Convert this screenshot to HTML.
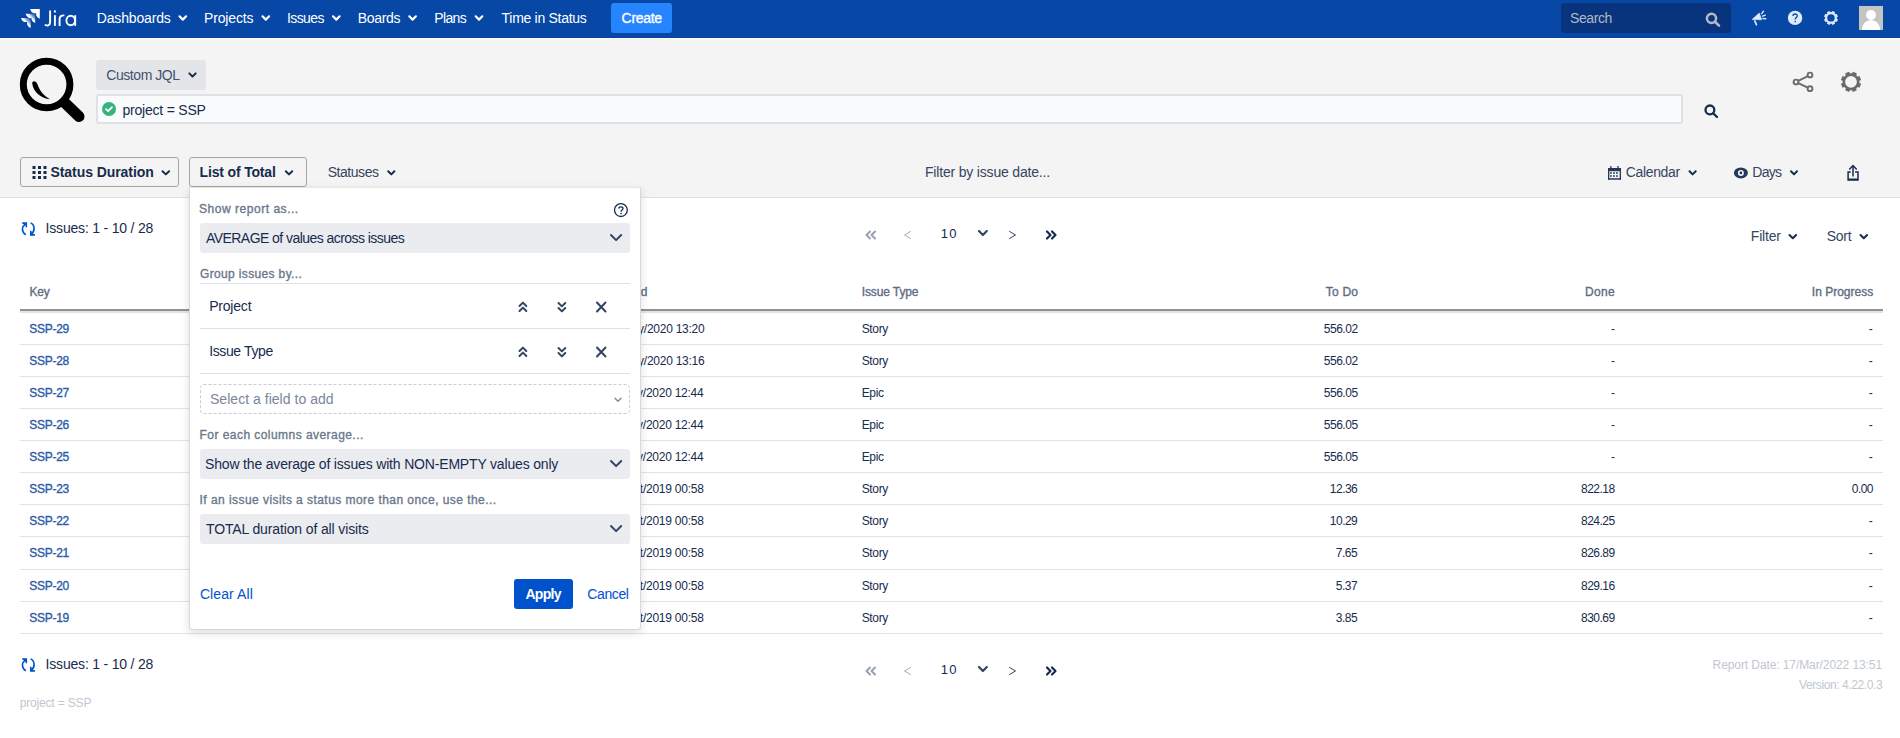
<!DOCTYPE html>
<html><head><meta charset="utf-8">
<style>
html,body{margin:0;padding:0}
body{width:1900px;height:738px;overflow:hidden;position:relative;background:#fff;font-family:'Liberation Sans',sans-serif}
.t{position:absolute;white-space:nowrap;font-family:'Liberation Sans',sans-serif}
.a{position:absolute}
svg{position:absolute;overflow:visible}
</style></head><body>
<!-- header -->
<div class="a" style="left:0;top:0;width:1900px;height:37px;background:#0747a6"></div>
<div class="a" style="left:0;top:37px;width:1900px;height:1px;background:#0a3f9e"></div>
<div class="a" style="left:0;top:38px;width:1900px;height:1px;background:#fbfcf9"></div>
<div class="a" style="left:0;top:39px;width:1900px;height:158px;background:#f4f4f4"></div>
<div class="a" style="left:0;top:197px;width:1900px;height:1px;background:#e0e1e6"></div>

<!-- jira logo -->
<svg style="left:0;top:0" width="60" height="38">
  <defs>
   <linearGradient id="lg1" gradientUnits="objectBoundingBox" x1="0.85" y1="0.15" x2="0.2" y2="0.8"><stop offset="0" stop-color="#fff" stop-opacity="0.2"/><stop offset="0.45" stop-color="#fff" stop-opacity="1"/><stop offset="1" stop-color="#fff"/></linearGradient>
  </defs>
  <path d="M30 9.1 L39.8 9.1 L39.8 18.7 Q37 17.8 36.2 15.5 L36.2 13.3 L33.6 13.3 Q31 12.2 30 9.1 Z" fill="#fff"/>
  <path d="M25.6 13.8 L35.2 13.8 L35.2 22.9 Q32.5 22 31.6 19.7 L31.6 17.9 L28.9 17.9 Q26.5 17 25.6 13.8 Z" fill="url(#lg1)"/>
  <path d="M20.9 18 L30.7 18 L30.7 27.8 Q28 27 27.1 24.5 L27.1 22.1 L24.3 22.1 Q21.8 21 20.9 18 Z" fill="url(#lg1)"/>
</svg>
<svg style="left:0;top:0" width="90" height="38">
 <g fill="none" stroke="#fff" stroke-width="1.9">
  <path d="M50.1 10.6 V22.3 C50.1 25.6 46.8 26.3 44.8 24.6"/>
  <path d="M54.9 15.2 V25.9"/>
  <path d="M59.6 25.9 V19 C59.6 16.3 61.6 15.2 64.4 15.4"/>
  <ellipse cx="70.7" cy="20.55" rx="4.3" ry="4.75"/>
  <path d="M75.2 15.2 V25.9"/>
 </g>
 <circle cx="54.9" cy="11.5" r="1.15" fill="#fff"/>
</svg>
<!-- nav chevrons -->
<svg style="left:0;top:0" width="1900" height="38">
 <g fill="none" stroke="#fff" stroke-width="2.2" stroke-linecap="round" stroke-linejoin="round">
  <path d="M179.5 16.3 L182.8 19.6 L186.1 16.3"/>
  <path d="M262.5 16.3 L265.8 19.6 L269.1 16.3"/>
  <path d="M333 16.3 L336.3 19.6 L339.6 16.3"/>
  <path d="M409.3 16.3 L412.6 19.6 L415.9 16.3"/>
  <path d="M475.7 16.3 L479 19.6 L482.3 16.3"/>
 </g>
</svg>
<div class="a" style="left:611px;top:3px;width:61px;height:30px;background:#2684ff;border-radius:3px"></div>
<div class="a" style="left:1561px;top:3px;width:170px;height:30px;background:#07347c;border-radius:3px"></div>
<svg style="left:1705px;top:12px" width="16" height="15" viewBox="0 0 16 15">
 <circle cx="6.5" cy="6.3" r="4.6" fill="none" stroke="#b3bac5" stroke-width="2.5"/>
 <path d="M10 9.8 L14 13.6" stroke="#b3bac5" stroke-width="2.6" stroke-linecap="round"/>
</svg>
<!-- megaphone -->
<svg style="left:0;top:0" width="1900" height="38">
 <path d="M1752.1 19.4 L1759.3 12.9 L1761.7 19.8 Z" fill="#deebff" stroke="#deebff" stroke-width="0.6" stroke-linejoin="round"/>
 <path d="M1754.8 21 L1756.4 24.6" stroke="#deebff" stroke-width="1.7" stroke-linecap="round"/>
 <g stroke="#deebff" stroke-width="1.4" stroke-linecap="round">
  <path d="M1761.6 13.6 L1763.5 11.3"/><path d="M1762.6 16.2 L1765.3 15.1"/><path d="M1763 18.5 L1765.8 18.7"/>
 </g>
 <circle cx="1795.05" cy="17.9" r="7.2" fill="#deebff"/>
 <path d="M1793 15.9 C1793 13.4 1797.3 13.4 1797.3 15.8 C1797.3 17.5 1795.2 17.5 1795.2 19.6" fill="none" stroke="#0747a6" stroke-width="1.3"/>
 <circle cx="1795.2" cy="21.6" r="0.8" fill="#0747a6"/>
 <path fill="#deebff" fill-rule="evenodd" d="M1836.85 17.13 L1837.98 16.61 L1836.85 13.88 L1835.68 14.31 L1834.59 13.22 L1835.02 12.05 L1832.29 10.92 L1831.77 12.05 L1830.23 12.05 L1829.71 10.92 L1826.98 12.05 L1827.41 13.22 L1826.32 14.31 L1825.15 13.88 L1824.02 16.61 L1825.15 17.13 L1825.15 18.67 L1824.02 19.19 L1825.15 21.92 L1826.32 21.49 L1827.41 22.58 L1826.98 23.75 L1829.71 24.88 L1830.23 23.75 L1831.77 23.75 L1832.29 24.88 L1835.02 23.75 L1834.59 22.58 L1835.68 21.49 L1836.85 21.92 L1837.98 19.19 L1836.85 18.67 Z M1834.70 17.90 A3.7 3.7 0 1 0 1827.30 17.90 A3.7 3.7 0 1 0 1834.70 17.90 Z"/>
</svg>
<!-- avatar -->
<div class="a" style="left:1859px;top:6px;width:24px;height:24px;background:#c4c4c4;overflow:hidden">
 <div class="a" style="left:7px;top:4px;width:10px;height:10px;border-radius:50%;background:#fff"></div>
 <div class="a" style="left:3px;top:14px;width:18px;height:16px;border-radius:9px 9px 0 0;background:#fff"></div>
</div>

<!-- big magnifier -->
<svg style="left:0;top:40px" width="100" height="90">
 <circle cx="46.6" cy="44.5" r="23.3" fill="none" stroke="#000" stroke-width="7"/>
 <path d="M64.5 62.5 L79 76.5" stroke="#000" stroke-width="11" stroke-linecap="round"/>
 <path d="M32.3 44 C31.5 40.5 36 40 37.3 44 C39.5 50.5 43.5 55.5 50 59.3 C41.5 58.5 33.5 52.5 32.3 44 Z" fill="#000"/>
</svg>
<!-- custom jql -->
<div class="a" style="left:96px;top:60px;width:110px;height:30px;background:#e4e5e9;border-radius:3px"></div>
<svg style="left:0;top:0" width="1900" height="200">
 <g fill="none" stroke-linecap="round" stroke-linejoin="round">
  <path d="M189.3 73.4 L192.5 76.5 L195.7 73.4" stroke="#172b4d" stroke-width="2"/>
  <path d="M162.5 171.2 L165.8 174.4 L169.1 171.2" stroke="#172b4d" stroke-width="2"/>
  <path d="M285.8 171.2 L289 174.4 L292.2 171.2" stroke="#172b4d" stroke-width="2"/>
  <path d="M388.2 171.2 L391.3 174.4 L394.4 171.2" stroke="#172b4d" stroke-width="2"/>
  <path d="M1689.5 171.3 L1692.6 174.4 L1695.7 171.3" stroke="#172b4d" stroke-width="2"/>
  <path d="M1791 171.3 L1794 174.4 L1797 171.3" stroke="#172b4d" stroke-width="2"/>
 </g>
</svg>
<div class="a" style="left:96px;top:94px;width:1583px;height:26px;background:#fafbfc;border:2px solid #dfe1e6;border-radius:3px"></div>
<svg style="left:102px;top:102px" width="14" height="14" viewBox="0 0 14 14">
 <circle cx="7" cy="7" r="7" fill="#36b37e"/>
 <path d="M4 7.2 L6.1 9.2 L10 5.2" fill="none" stroke="#fff" stroke-width="1.8" stroke-linecap="round" stroke-linejoin="round"/>
</svg>
<svg style="left:1704px;top:104px" width="15" height="15" viewBox="0 0 15 15">
 <circle cx="5.9" cy="5.9" r="4.4" fill="none" stroke="#172b4d" stroke-width="2.3"/>
 <path d="M9.3 9.4 L13 13" stroke="#172b4d" stroke-width="2.3" stroke-linecap="round"/>
</svg>
<!-- share -->
<svg style="left:0;top:0" width="1900" height="100">
 <g fill="none" stroke="#6b6b6b" stroke-width="1.9">
  <circle cx="1796" cy="82" r="2.4"/><circle cx="1810" cy="75" r="2.4"/><circle cx="1810" cy="88.7" r="2.4"/>
  <path d="M1798.2 80.9 L1807.8 76.1 M1798.2 83.1 L1807.8 87.6"/>
 </g>
</svg>
<!-- gear gray -->
<svg style="left:0;top:0" width="1900" height="100">
 <path fill="#6b6b6b" fill-rule="evenodd" d="M1859.43 80.69 L1861.13 79.92 L1859.49 75.97 L1857.74 76.63 L1856.17 75.06 L1856.83 73.31 L1852.88 71.67 L1852.11 73.37 L1849.89 73.37 L1849.12 71.67 L1845.17 73.31 L1845.83 75.06 L1844.26 76.63 L1842.51 75.97 L1840.87 79.92 L1842.57 80.69 L1842.57 82.91 L1840.87 83.68 L1842.51 87.63 L1844.26 86.97 L1845.83 88.54 L1845.17 90.29 L1849.12 91.93 L1849.89 90.23 L1852.11 90.23 L1852.88 91.93 L1856.83 90.29 L1856.17 88.54 L1857.74 86.97 L1859.49 87.63 L1861.13 83.68 L1859.43 82.91 Z M1856.90 81.80 A5.9 5.9 0 1 0 1845.10 81.80 A5.9 5.9 0 1 0 1856.90 81.80 Z"/>
</svg>
<!-- toolbar buttons -->
<div class="a" style="left:20px;top:157px;width:157px;height:28px;border:1px solid #a6a6a6;border-radius:3px"></div>
<div class="a" style="left:189px;top:157px;width:116px;height:28px;border:1px solid #a6a6a6;border-radius:3px"></div>
<svg style="left:32px;top:166px" width="15" height="14" viewBox="0 0 15 14">
 <g fill="#172b4d">
  <rect x="0.5" y="0" width="3" height="3"/><rect x="6" y="0" width="3" height="3"/><rect x="11.5" y="0" width="3" height="3"/>
  <rect x="0.5" y="5" width="3" height="3"/><rect x="6" y="5" width="3" height="3"/><rect x="11.5" y="5" width="3" height="3"/>
  <rect x="0.5" y="10" width="3" height="3"/><rect x="6" y="10" width="3" height="3"/><rect x="11.5" y="10" width="3" height="3"/>
 </g>
</svg>
<!-- calendar / eye / export -->
<svg style="left:0;top:0" width="1900" height="200">
 <g fill="#253858">
  <rect x="1608" y="168" width="13" height="3.2"/>
  <rect x="1608" y="168" width="1.3" height="11.6"/>
  <rect x="1619.7" y="168" width="1.3" height="11.6"/>
  <rect x="1608" y="178.2" width="13" height="1.5"/>
  <rect x="1610.2" y="166" width="1.3" height="2.5"/><rect x="1617.4" y="166" width="1.3" height="2.5"/>
  <rect x="1610.2" y="172.1" width="1.5" height="1.8"/><rect x="1613.2" y="172.1" width="1.5" height="1.8"/><rect x="1616.2" y="172.1" width="1.5" height="1.8"/>
  <rect x="1610.2" y="175.1" width="1.5" height="1.8"/><rect x="1613.2" y="175.1" width="1.5" height="1.8"/><rect x="1616.2" y="175.1" width="1.5" height="1.8"/>
 </g>
 <ellipse cx="1740.9" cy="172.9" rx="7" ry="5.5" fill="#253858"/>
 <circle cx="1740.9" cy="172.9" r="3" fill="#f4f4f4"/>
 <circle cx="1740.9" cy="172.9" r="1.3" fill="#172b4d"/>
 <g fill="none" stroke="#172b4d" stroke-width="1.5">
  <path d="M1850.8 172.1 H1848.1 V180 H1858 V172.1 H1855.1"/>
  <path d="M1853 176.5 V166"/>
  <path d="M1849.3 169.4 L1853 165.6 L1856.7 169.4"/>
 </g>
 <path d="M1848.1 179.3 H1858" stroke="#172b4d" stroke-width="1.6"/>
</svg>

<!-- refresh icons & pagination -->
<svg style="left:0;top:0" width="1900" height="738">
 <g id="pg1">
 <g fill="none" stroke="#0052cc" stroke-width="1.6">
  <path d="M26 223.8 C21.3 226.5 21.3 232 25.8 234.8"/>
  <path d="M22.3 223.1 H26.3 V227.3"/>
  <path d="M30.6 222.9 C35.2 225.2 35.2 231.5 31 234.2"/>
  <path d="M34.9 234.9 H30.8 V230.8"/>
 </g>
 <g fill="none" stroke-linecap="round" stroke-linejoin="round">
  <path d="M870 231.5 L866.5 235 L870 238.5 M875 231.5 L871.5 235 L875 238.5" stroke="#97a0af" stroke-width="2"/>
  <path d="M910.5 231.5 L904.5 235 L910.5 238.5" stroke="#a5adba" stroke-width="1"/>
  <path d="M979 231 L982.9 235 L986.8 231" stroke="#344563" stroke-width="2.2"/>
  <path d="M1009.5 231.5 L1015.5 235 L1009.5 238.5" stroke="#344563" stroke-width="1"/>
  <path d="M1047 231.5 L1050.5 235 L1047 238.5 M1052 231.5 L1055.5 235 L1052 238.5" stroke="#172b4d" stroke-width="2.2"/>
  <path d="M1789.5 235 L1792.8 238.3 L1796.1 235" stroke="#172b4d" stroke-width="2"/>
  <path d="M1860.5 235 L1863.8 238.3 L1867.1 235" stroke="#172b4d" stroke-width="2"/>
 </g>
 </g>
 <g transform="translate(0,436)">
 <g fill="none" stroke="#0052cc" stroke-width="1.6">
  <path d="M26 223.8 C21.3 226.5 21.3 232 25.8 234.8"/>
  <path d="M22.3 223.1 H26.3 V227.3"/>
  <path d="M30.6 222.9 C35.2 225.2 35.2 231.5 31 234.2"/>
  <path d="M34.9 234.9 H30.8 V230.8"/>
 </g>
 <g fill="none" stroke-linecap="round" stroke-linejoin="round">
  <path d="M870 231.5 L866.5 235 L870 238.5 M875 231.5 L871.5 235 L875 238.5" stroke="#97a0af" stroke-width="2"/>
  <path d="M910.5 231.5 L904.5 235 L910.5 238.5" stroke="#a5adba" stroke-width="1"/>
  <path d="M979 231 L982.9 235 L986.8 231" stroke="#344563" stroke-width="2.2"/>
  <path d="M1009.5 231.5 L1015.5 235 L1009.5 238.5" stroke="#344563" stroke-width="1"/>
  <path d="M1047 231.5 L1050.5 235 L1047 238.5 M1052 231.5 L1055.5 235 L1052 238.5" stroke="#172b4d" stroke-width="2.2"/>
 </g>
 </g>
</svg>

<!-- table lines -->
<div class="a" style="left:20px;top:309px;width:1863px;height:2px;background:#909090"></div>
<div class="a" style="left:20px;top:311px;width:1863px;height:2px;background:#e3e4e8"></div>
<div class="a" style="left:20px;top:344px;width:1863px;height:1px;background:#e1e2e6"></div>
<div class="a" style="left:20px;top:376px;width:1863px;height:1px;background:#e1e2e6"></div>
<div class="a" style="left:20px;top:408px;width:1863px;height:1px;background:#e1e2e6"></div>
<div class="a" style="left:20px;top:440px;width:1863px;height:1px;background:#e1e2e6"></div>
<div class="a" style="left:20px;top:472px;width:1863px;height:1px;background:#e1e2e6"></div>
<div class="a" style="left:20px;top:504px;width:1863px;height:1px;background:#e1e2e6"></div>
<div class="a" style="left:20px;top:536px;width:1863px;height:1px;background:#e1e2e6"></div>
<div class="a" style="left:20px;top:569px;width:1863px;height:1px;background:#e1e2e6"></div>
<div class="a" style="left:20px;top:601px;width:1863px;height:1px;background:#e1e2e6"></div>
<div class="a" style="left:20px;top:633px;width:1863px;height:1px;background:#e1e2e6"></div>

<!-- popup -->
<div class="a" style="left:189px;top:187px;width:450px;height:441px;background:#fff;border:1px solid #d8d8d8;border-top-color:#e6e6e6;border-radius:0 0 3px 3px;box-shadow:0 3px 10px rgba(0,0,0,0.13);z-index:3"></div>
<svg style="left:0;top:0;z-index:4" width="1900" height="738">
 <circle cx="620.9" cy="210.1" r="6.4" fill="none" stroke="#172b4d" stroke-width="1.3"/>
 <path d="M618.9 208.5 C618.9 206.3 623 206.3 623 208.5 C623 210 621 210 621 211.8" fill="none" stroke="#172b4d" stroke-width="1.3"/>
 <circle cx="621" cy="213.6" r="0.8" fill="#172b4d"/>
 <rect x="200" y="223" width="430" height="30" rx="3" fill="#ebecf0"/>
 <rect x="200" y="449" width="430" height="30" rx="3" fill="#ebecf0"/>
 <rect x="200" y="514" width="430" height="30" rx="3" fill="#ebecf0"/>
 <rect x="200.5" y="384.5" width="429" height="29" rx="3" fill="none" stroke="#c8ccd4" stroke-dasharray="3 2"/>
 <rect x="200" y="283" width="430" height="1" fill="#dfe1e6"/>
 <rect x="200" y="328" width="430" height="1" fill="#dfe1e6"/>
 <rect x="200" y="373" width="430" height="1" fill="#dfe1e6"/>
 <g fill="none" stroke="#344563" stroke-width="2" stroke-linecap="round" stroke-linejoin="round">
  <path d="M611 235 L616.1 240.1 L621.2 235"/>
  <path d="M611 461 L616.1 466.1 L621.2 461"/>
  <path d="M611 526 L616.1 531.1 L621.2 526"/>
  <path d="M519.5 306 L522.9 302.6 L526.3 306 M519.5 311 L522.9 307.6 L526.3 311"/>
  <path d="M558.5 303 L561.9 306.4 L565.3 303 M558.5 308 L561.9 311.4 L565.3 308"/>
  <path d="M597 302.5 L605.5 311.5 M605.5 302.5 L597 311.5"/>
  <path d="M519.5 351 L522.9 347.6 L526.3 351 M519.5 356 L522.9 352.6 L526.3 356"/>
  <path d="M558.5 348 L561.9 351.4 L565.3 348 M558.5 353 L561.9 356.4 L565.3 353"/>
  <path d="M597 347.5 L605.5 356.5 M605.5 347.5 L597 356.5"/>
 </g>
 <path d="M615 398.2 L618 401.2 L621 398.2" fill="none" stroke="#7a869a" stroke-width="1.3" stroke-linecap="round" stroke-linejoin="round"/>
 <rect x="514" y="579" width="59" height="30" rx="3" fill="#0052cc"/>
</svg>
<div class="t" style="left:96.80px;top:11px;font-size:14px;line-height:14px;font-weight:400;color:#ffffff;letter-spacing:-0.167px;z-index:1;">Dashboards</div>
<div class="t" style="left:204.00px;top:11px;font-size:14px;line-height:14px;font-weight:400;color:#ffffff;letter-spacing:-0.143px;z-index:1;">Projects</div>
<div class="t" style="left:287.00px;top:11px;font-size:14px;line-height:14px;font-weight:400;color:#ffffff;letter-spacing:-0.6px;z-index:1;">Issues</div>
<div class="t" style="left:357.70px;top:11px;font-size:14px;line-height:14px;font-weight:400;color:#ffffff;letter-spacing:-0.32px;z-index:1;">Boards</div>
<div class="t" style="left:434.20px;top:11px;font-size:14px;line-height:14px;font-weight:400;color:#ffffff;letter-spacing:-0.6px;z-index:1;">Plans</div>
<div class="t" style="left:501.60px;top:11px;font-size:14px;line-height:14px;font-weight:400;color:#ffffff;letter-spacing:-0.292px;z-index:1;">Time in Status</div>
<div class="t" style="left:621.60px;top:11px;font-size:14px;line-height:14px;font-weight:400;color:#ffffff;letter-spacing:-0.32px;z-index:1;-webkit-text-stroke:0.35px currentColor;">Create</div>
<div class="t" style="left:1570.00px;top:11px;font-size:14px;line-height:14px;font-weight:400;color:#b3bac5;letter-spacing:-0.4px;z-index:1;">Search</div>
<div class="t" style="left:106.30px;top:68px;font-size:14px;line-height:14px;font-weight:400;color:#42526e;letter-spacing:-0.444px;z-index:1;">Custom JQL</div>
<div class="t" style="left:122.50px;top:103px;font-size:14px;line-height:14px;font-weight:400;color:#172b4d;letter-spacing:-0.217px;z-index:1;">project = SSP</div>
<div class="t" style="left:50.50px;top:165px;font-size:14px;line-height:14px;font-weight:700;color:#172b4d;letter-spacing:-0.071px;z-index:1;">Status Duration</div>
<div class="t" style="left:199.60px;top:165px;font-size:14px;line-height:14px;font-weight:700;color:#172b4d;letter-spacing:-0.167px;z-index:1;">List of Total</div>
<div class="t" style="left:327.70px;top:165px;font-size:14px;line-height:14px;font-weight:400;color:#344563;letter-spacing:-0.457px;z-index:1;">Statuses</div>
<div class="t" style="left:925.00px;top:165px;font-size:14px;line-height:14px;font-weight:400;color:#344563;letter-spacing:-0.182px;z-index:1;">Filter by issue date...</div>
<div class="t" style="left:1625.70px;top:165px;font-size:14px;line-height:14px;font-weight:400;color:#344563;letter-spacing:-0.329px;z-index:1;">Calendar</div>
<div class="t" style="left:1752.30px;top:165px;font-size:14px;line-height:14px;font-weight:400;color:#344563;letter-spacing:-0.767px;z-index:1;">Days</div>
<div class="t" style="left:45.60px;top:221px;font-size:14px;line-height:14px;font-weight:400;color:#172b4d;letter-spacing:-0.194px;z-index:1;">Issues: 1 - 10 / 28</div>
<div class="t" style="left:45.60px;top:657px;font-size:14px;line-height:14px;font-weight:400;color:#172b4d;letter-spacing:-0.194px;z-index:1;">Issues: 1 - 10 / 28</div>
<div class="t" style="left:940.70px;top:227px;font-size:13px;line-height:13px;font-weight:400;color:#172b4d;letter-spacing:1.3px;z-index:1;">10</div>
<div class="t" style="left:940.70px;top:663px;font-size:13px;line-height:13px;font-weight:400;color:#172b4d;letter-spacing:1.3px;z-index:1;">10</div>
<div class="t" style="left:1750.80px;top:229px;font-size:14px;line-height:14px;font-weight:400;color:#344563;letter-spacing:-0.18px;z-index:1;">Filter</div>
<div class="t" style="left:1826.70px;top:229px;font-size:14px;line-height:14px;font-weight:400;color:#344563;letter-spacing:-0.233px;z-index:1;">Sort</div>
<div class="t" style="left:29.60px;top:286px;font-size:12px;line-height:12px;font-weight:400;color:#5e6c84;letter-spacing:-0.3px;z-index:1;-webkit-text-stroke:0.35px currentColor;">Key</div>
<div class="t" style="left:604.80px;top:286px;font-size:12px;line-height:12px;font-weight:400;color:#5e6c84;letter-spacing:0px;z-index:1;-webkit-text-stroke:0.35px currentColor;">Created</div>
<div class="t" style="left:861.70px;top:286px;font-size:12px;line-height:12px;font-weight:400;color:#5e6c84;letter-spacing:-0.111px;z-index:1;-webkit-text-stroke:0.35px currentColor;">Issue Type</div>
<div class="t" style="left:1325.80px;top:286px;font-size:12px;line-height:12px;font-weight:400;color:#5e6c84;letter-spacing:0.2px;z-index:1;-webkit-text-stroke:0.35px currentColor;">To Do</div>
<div class="t" style="left:1585.00px;top:286px;font-size:12px;line-height:12px;font-weight:400;color:#5e6c84;letter-spacing:0.333px;z-index:1;-webkit-text-stroke:0.35px currentColor;">Done</div>
<div class="t" style="left:1811.80px;top:286px;font-size:12px;line-height:12px;font-weight:400;color:#5e6c84;letter-spacing:0.0px;z-index:1;-webkit-text-stroke:0.35px currentColor;">In Progress</div>
<div class="t" style="left:29.20px;top:323px;font-size:12px;line-height:12px;font-weight:400;color:#2d5ca8;letter-spacing:-0.26px;z-index:1;-webkit-text-stroke:0.35px currentColor;">SSP-29</div>
<div class="t" style="left:606.00px;top:323px;font-size:12px;line-height:12px;font-weight:400;color:#172b4d;letter-spacing:-0.253px;z-index:1;">17/May/2020 13:20</div>
<div class="t" style="left:861.70px;top:323px;font-size:12px;line-height:12px;font-weight:400;color:#172b4d;letter-spacing:-0.338px;z-index:1;">Story</div>
<div class="t" style="left:1323.80px;top:323px;font-size:12px;line-height:12px;font-weight:400;color:#172b4d;letter-spacing:-0.49px;z-index:1;">556.02</div>
<div class="t" style="left:1611.00px;top:323px;font-size:12px;line-height:12px;font-weight:400;color:#172b4d;letter-spacing:0px;z-index:1;">-</div>
<div class="t" style="left:1868.80px;top:323px;font-size:12px;line-height:12px;font-weight:400;color:#172b4d;letter-spacing:0px;z-index:1;">-</div>
<div class="t" style="left:29.20px;top:355px;font-size:12px;line-height:12px;font-weight:400;color:#2d5ca8;letter-spacing:-0.26px;z-index:1;-webkit-text-stroke:0.35px currentColor;">SSP-28</div>
<div class="t" style="left:606.00px;top:355px;font-size:12px;line-height:12px;font-weight:400;color:#172b4d;letter-spacing:-0.253px;z-index:1;">17/May/2020 13:16</div>
<div class="t" style="left:861.70px;top:355px;font-size:12px;line-height:12px;font-weight:400;color:#172b4d;letter-spacing:-0.338px;z-index:1;">Story</div>
<div class="t" style="left:1323.80px;top:355px;font-size:12px;line-height:12px;font-weight:400;color:#172b4d;letter-spacing:-0.49px;z-index:1;">556.02</div>
<div class="t" style="left:1611.00px;top:355px;font-size:12px;line-height:12px;font-weight:400;color:#172b4d;letter-spacing:0px;z-index:1;">-</div>
<div class="t" style="left:1868.80px;top:355px;font-size:12px;line-height:12px;font-weight:400;color:#172b4d;letter-spacing:0px;z-index:1;">-</div>
<div class="t" style="left:29.20px;top:387px;font-size:12px;line-height:12px;font-weight:400;color:#2d5ca8;letter-spacing:-0.26px;z-index:1;-webkit-text-stroke:0.35px currentColor;">SSP-27</div>
<div class="t" style="left:605.00px;top:387px;font-size:12px;line-height:12px;font-weight:400;color:#172b4d;letter-spacing:-0.255px;z-index:1;">17/May/2020 12:44</div>
<div class="t" style="left:861.70px;top:387px;font-size:12px;line-height:12px;font-weight:400;color:#172b4d;letter-spacing:-0.367px;z-index:1;">Epic</div>
<div class="t" style="left:1323.80px;top:387px;font-size:12px;line-height:12px;font-weight:400;color:#172b4d;letter-spacing:-0.49px;z-index:1;">556.05</div>
<div class="t" style="left:1611.00px;top:387px;font-size:12px;line-height:12px;font-weight:400;color:#172b4d;letter-spacing:0px;z-index:1;">-</div>
<div class="t" style="left:1868.80px;top:387px;font-size:12px;line-height:12px;font-weight:400;color:#172b4d;letter-spacing:0px;z-index:1;">-</div>
<div class="t" style="left:29.20px;top:419px;font-size:12px;line-height:12px;font-weight:400;color:#2d5ca8;letter-spacing:-0.26px;z-index:1;-webkit-text-stroke:0.35px currentColor;">SSP-26</div>
<div class="t" style="left:605.00px;top:419px;font-size:12px;line-height:12px;font-weight:400;color:#172b4d;letter-spacing:-0.255px;z-index:1;">17/May/2020 12:44</div>
<div class="t" style="left:861.70px;top:419px;font-size:12px;line-height:12px;font-weight:400;color:#172b4d;letter-spacing:-0.367px;z-index:1;">Epic</div>
<div class="t" style="left:1323.80px;top:419px;font-size:12px;line-height:12px;font-weight:400;color:#172b4d;letter-spacing:-0.49px;z-index:1;">556.05</div>
<div class="t" style="left:1611.00px;top:419px;font-size:12px;line-height:12px;font-weight:400;color:#172b4d;letter-spacing:0px;z-index:1;">-</div>
<div class="t" style="left:1868.80px;top:419px;font-size:12px;line-height:12px;font-weight:400;color:#172b4d;letter-spacing:0px;z-index:1;">-</div>
<div class="t" style="left:29.20px;top:451px;font-size:12px;line-height:12px;font-weight:400;color:#2d5ca8;letter-spacing:-0.26px;z-index:1;-webkit-text-stroke:0.35px currentColor;">SSP-25</div>
<div class="t" style="left:605.00px;top:451px;font-size:12px;line-height:12px;font-weight:400;color:#172b4d;letter-spacing:-0.255px;z-index:1;">17/May/2020 12:44</div>
<div class="t" style="left:861.70px;top:451px;font-size:12px;line-height:12px;font-weight:400;color:#172b4d;letter-spacing:-0.367px;z-index:1;">Epic</div>
<div class="t" style="left:1323.80px;top:451px;font-size:12px;line-height:12px;font-weight:400;color:#172b4d;letter-spacing:-0.49px;z-index:1;">556.05</div>
<div class="t" style="left:1611.00px;top:451px;font-size:12px;line-height:12px;font-weight:400;color:#172b4d;letter-spacing:0px;z-index:1;">-</div>
<div class="t" style="left:1868.80px;top:451px;font-size:12px;line-height:12px;font-weight:400;color:#172b4d;letter-spacing:0px;z-index:1;">-</div>
<div class="t" style="left:29.20px;top:483px;font-size:12px;line-height:12px;font-weight:400;color:#2d5ca8;letter-spacing:-0.26px;z-index:1;-webkit-text-stroke:0.35px currentColor;">SSP-23</div>
<div class="t" style="left:609.00px;top:483px;font-size:12px;line-height:12px;font-weight:400;color:#172b4d;letter-spacing:-0.243px;z-index:1;">25/Oct/2019 00:58</div>
<div class="t" style="left:861.70px;top:483px;font-size:12px;line-height:12px;font-weight:400;color:#172b4d;letter-spacing:-0.338px;z-index:1;">Story</div>
<div class="t" style="left:1329.80px;top:483px;font-size:12px;line-height:12px;font-weight:400;color:#172b4d;letter-spacing:-0.507px;z-index:1;">12.36</div>
<div class="t" style="left:1581.00px;top:483px;font-size:12px;line-height:12px;font-weight:400;color:#172b4d;letter-spacing:-0.504px;z-index:1;">822.18</div>
<div class="t" style="left:1851.80px;top:483px;font-size:12px;line-height:12px;font-weight:400;color:#172b4d;letter-spacing:-0.537px;z-index:1;">0.00</div>
<div class="t" style="left:29.20px;top:515px;font-size:12px;line-height:12px;font-weight:400;color:#2d5ca8;letter-spacing:-0.26px;z-index:1;-webkit-text-stroke:0.35px currentColor;">SSP-22</div>
<div class="t" style="left:609.00px;top:515px;font-size:12px;line-height:12px;font-weight:400;color:#172b4d;letter-spacing:-0.243px;z-index:1;">25/Oct/2019 00:58</div>
<div class="t" style="left:861.70px;top:515px;font-size:12px;line-height:12px;font-weight:400;color:#172b4d;letter-spacing:-0.338px;z-index:1;">Story</div>
<div class="t" style="left:1329.80px;top:515px;font-size:12px;line-height:12px;font-weight:400;color:#172b4d;letter-spacing:-0.507px;z-index:1;">10.29</div>
<div class="t" style="left:1581.00px;top:515px;font-size:12px;line-height:12px;font-weight:400;color:#172b4d;letter-spacing:-0.504px;z-index:1;">824.25</div>
<div class="t" style="left:1868.80px;top:515px;font-size:12px;line-height:12px;font-weight:400;color:#172b4d;letter-spacing:0px;z-index:1;">-</div>
<div class="t" style="left:29.20px;top:547px;font-size:12px;line-height:12px;font-weight:400;color:#2d5ca8;letter-spacing:-0.26px;z-index:1;-webkit-text-stroke:0.35px currentColor;">SSP-21</div>
<div class="t" style="left:609.00px;top:547px;font-size:12px;line-height:12px;font-weight:400;color:#172b4d;letter-spacing:-0.243px;z-index:1;">25/Oct/2019 00:58</div>
<div class="t" style="left:861.70px;top:547px;font-size:12px;line-height:12px;font-weight:400;color:#172b4d;letter-spacing:-0.338px;z-index:1;">Story</div>
<div class="t" style="left:1335.80px;top:547px;font-size:12px;line-height:12px;font-weight:400;color:#172b4d;letter-spacing:-0.513px;z-index:1;">7.65</div>
<div class="t" style="left:1581.00px;top:547px;font-size:12px;line-height:12px;font-weight:400;color:#172b4d;letter-spacing:-0.504px;z-index:1;">826.89</div>
<div class="t" style="left:1868.80px;top:547px;font-size:12px;line-height:12px;font-weight:400;color:#172b4d;letter-spacing:0px;z-index:1;">-</div>
<div class="t" style="left:29.20px;top:580px;font-size:12px;line-height:12px;font-weight:400;color:#2d5ca8;letter-spacing:-0.26px;z-index:1;-webkit-text-stroke:0.35px currentColor;">SSP-20</div>
<div class="t" style="left:609.00px;top:580px;font-size:12px;line-height:12px;font-weight:400;color:#172b4d;letter-spacing:-0.243px;z-index:1;">25/Oct/2019 00:58</div>
<div class="t" style="left:861.70px;top:580px;font-size:12px;line-height:12px;font-weight:400;color:#172b4d;letter-spacing:-0.338px;z-index:1;">Story</div>
<div class="t" style="left:1335.80px;top:580px;font-size:12px;line-height:12px;font-weight:400;color:#172b4d;letter-spacing:-0.513px;z-index:1;">5.37</div>
<div class="t" style="left:1581.00px;top:580px;font-size:12px;line-height:12px;font-weight:400;color:#172b4d;letter-spacing:-0.504px;z-index:1;">829.16</div>
<div class="t" style="left:1868.80px;top:580px;font-size:12px;line-height:12px;font-weight:400;color:#172b4d;letter-spacing:0px;z-index:1;">-</div>
<div class="t" style="left:29.20px;top:612px;font-size:12px;line-height:12px;font-weight:400;color:#2d5ca8;letter-spacing:-0.26px;z-index:1;-webkit-text-stroke:0.35px currentColor;">SSP-19</div>
<div class="t" style="left:609.00px;top:612px;font-size:12px;line-height:12px;font-weight:400;color:#172b4d;letter-spacing:-0.243px;z-index:1;">25/Oct/2019 00:58</div>
<div class="t" style="left:861.70px;top:612px;font-size:12px;line-height:12px;font-weight:400;color:#172b4d;letter-spacing:-0.338px;z-index:1;">Story</div>
<div class="t" style="left:1335.80px;top:612px;font-size:12px;line-height:12px;font-weight:400;color:#172b4d;letter-spacing:-0.513px;z-index:1;">3.85</div>
<div class="t" style="left:1581.00px;top:612px;font-size:12px;line-height:12px;font-weight:400;color:#172b4d;letter-spacing:-0.504px;z-index:1;">830.69</div>
<div class="t" style="left:1868.80px;top:612px;font-size:12px;line-height:12px;font-weight:400;color:#172b4d;letter-spacing:0px;z-index:1;">-</div>
<div class="t" style="left:199.00px;top:203px;font-size:12px;line-height:12px;font-weight:400;color:#6b778c;letter-spacing:0.531px;z-index:5;-webkit-text-stroke:0.35px currentColor;">Show report as...</div>
<div class="t" style="left:206.00px;top:231px;font-size:14px;line-height:14px;font-weight:400;color:#172b4d;letter-spacing:-0.553px;z-index:5;">AVERAGE of values across issues</div>
<div class="t" style="left:200.00px;top:268px;font-size:12px;line-height:12px;font-weight:400;color:#6b778c;letter-spacing:0.353px;z-index:5;-webkit-text-stroke:0.35px currentColor;">Group issues by...</div>
<div class="t" style="left:209.20px;top:299px;font-size:14px;line-height:14px;font-weight:400;color:#172b4d;letter-spacing:-0.2px;z-index:5;">Project</div>
<div class="t" style="left:209.20px;top:344px;font-size:14px;line-height:14px;font-weight:400;color:#172b4d;letter-spacing:-0.378px;z-index:5;">Issue Type</div>
<div class="t" style="left:210.00px;top:392px;font-size:14px;line-height:14px;font-weight:400;color:#7a869a;letter-spacing:0.03px;z-index:5;">Select a field to add</div>
<div class="t" style="left:199.60px;top:429px;font-size:12px;line-height:12px;font-weight:400;color:#6b778c;letter-spacing:0.446px;z-index:5;-webkit-text-stroke:0.35px currentColor;">For each columns average...</div>
<div class="t" style="left:205.00px;top:457px;font-size:14px;line-height:14px;font-weight:400;color:#172b4d;letter-spacing:-0.173px;z-index:5;">Show the average of issues with NON-EMPTY values only</div>
<div class="t" style="left:199.60px;top:494px;font-size:12px;line-height:12px;font-weight:400;color:#6b778c;letter-spacing:0.447px;z-index:5;-webkit-text-stroke:0.35px currentColor;">If an issue visits a status more than once, use the...</div>
<div class="t" style="left:206.00px;top:522px;font-size:14px;line-height:14px;font-weight:400;color:#172b4d;letter-spacing:-0.13px;z-index:5;">TOTAL duration of all visits</div>
<div class="t" style="left:199.90px;top:587px;font-size:14px;line-height:14px;font-weight:400;color:#0052cc;letter-spacing:0.1px;z-index:5;">Clear All</div>
<div class="t" style="left:525.40px;top:587px;font-size:14px;line-height:14px;font-weight:700;color:#ffffff;letter-spacing:-0.675px;z-index:5;">Apply</div>
<div class="t" style="left:587.30px;top:587px;font-size:14px;line-height:14px;font-weight:400;color:#0052cc;letter-spacing:-0.4px;z-index:5;">Cancel</div>
<div class="t" style="left:1712.60px;top:659px;font-size:12px;line-height:12px;font-weight:400;color:#c1c7d0;letter-spacing:-0.09px;z-index:1;">Report Date: 17/Mar/2022 13:51</div>
<div class="t" style="left:1799.00px;top:679px;font-size:12px;line-height:12px;font-weight:400;color:#c1c7d0;letter-spacing:-0.4px;z-index:1;">Version: 4.22.0.3</div>
<div class="t" style="left:19.70px;top:697px;font-size:12px;line-height:12px;font-weight:400;color:#c1c7d0;letter-spacing:-0.167px;z-index:1;">project = SSP</div>
</body></html>
